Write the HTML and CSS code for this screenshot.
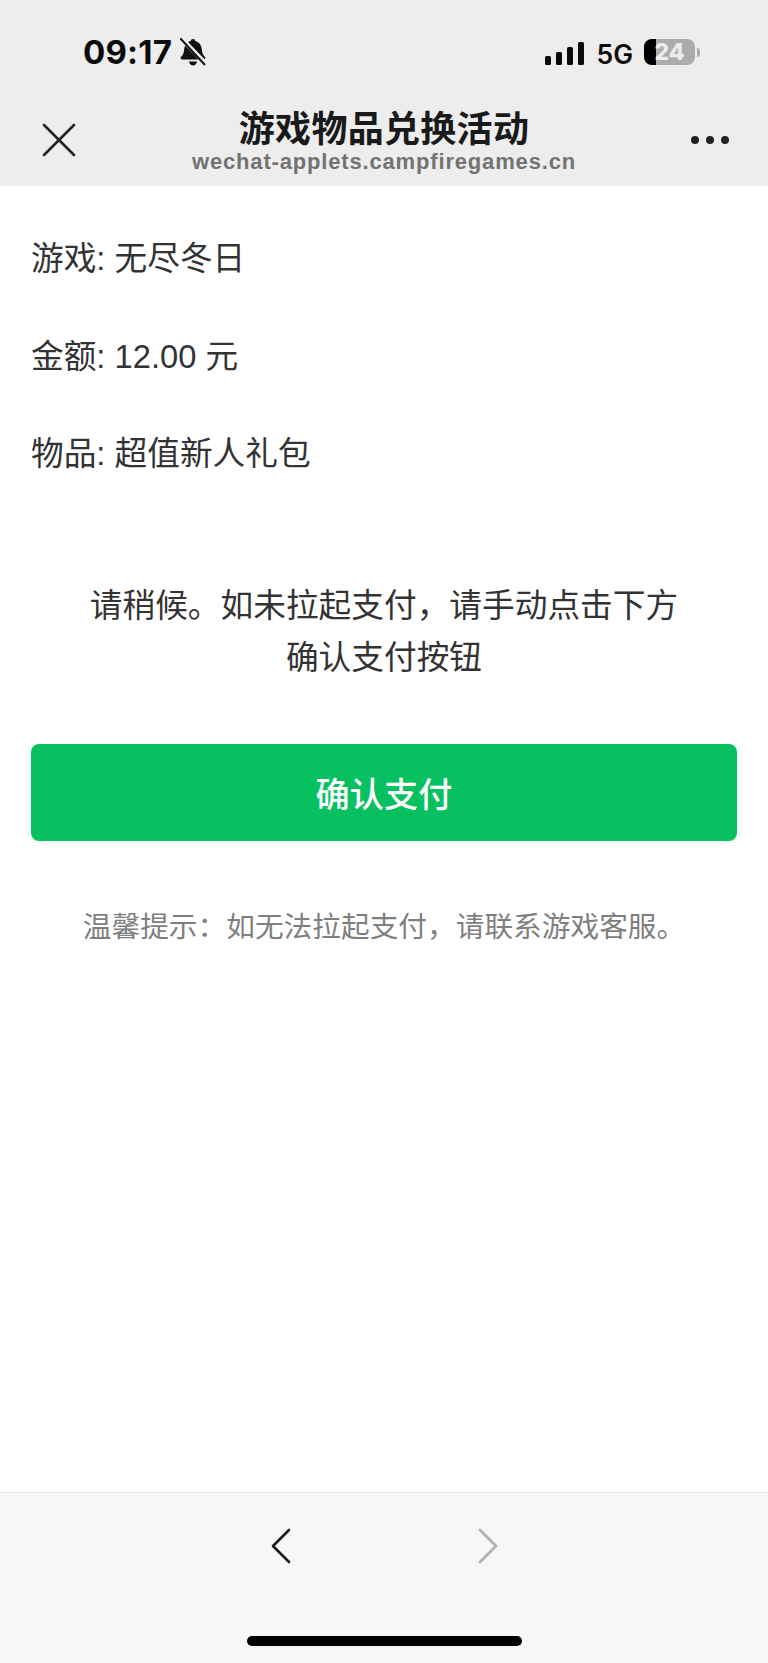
FILE: index.html
```html
<!DOCTYPE html>
<html lang="zh-CN">
<head>
<meta charset="utf-8">
<title>游戏物品兑换活动</title>
<link rel="stylesheet" href="styles.css">
</head>
<body>
<div class="screen">
  <header class="top">
    <div class="status">
      <div class="status-left">
        <span class="time">09:17</span>
        <svg class="bell" viewBox="0 0 26 28" width="26" height="28">
          <path d="M13 1c1.300 0 2.200.9 2.300 2 4 1 6.200 4.200 6.500 8.300.2 3.300 1 5.400 3.100 7.500.9 1 .4 2.700-1 2.700H2.100c-1.400 0-1.900-1.700-1-2.700 2.100-2.100 2.900-4.200 3.100-7.500.3-4.100 2.500-7.300 6.500-8.300.1-1.100 1-2 2.300-2z" fill="#111"/>
          <path d="M9 23.500h8c-.3 2.400-1.900 3.900-4 3.900s-3.700-1.500-4-3.900z" fill="#111"/>
          <path d="M1 0 26 26" stroke="#ededed" stroke-width="4.500"/>
          <path d="M0 0 25 27" stroke="#111" stroke-width="2"/>
        </svg>
      </div>
      <div class="status-right">
        <svg class="signal" viewBox="0 0 39 23" width="39" height="23">
          <rect x="0" y="14" width="6" height="9" rx="1.500"/>
          <rect x="11" y="10" width="6" height="13" rx="1.500"/>
          <rect x="22" y="5" width="6" height="18" rx="1.500"/>
          <rect x="33" y="0" width="6" height="23" rx="1.500"/>
        </svg>
        <span class="net">5G</span>
        <div class="battery">
          <div class="battery-body">
            <div class="battery-fill"></div>
            <span class="battery-level">24</span>
          </div>
          <div class="battery-cap"></div>
        </div>
      </div>
    </div>
    <div class="nav">
      <svg class="close" viewBox="0 0 34 34" width="34" height="34">
        <path d="M2 2 32 32M32 2 2 32" stroke="#222" stroke-width="2.600" fill="none" stroke-linecap="round"/>
      </svg>
      <div class="heading">
        <div class="title">游戏物品兑换活动</div>
        <div class="domain">wechat-applets.campfiregames.cn</div>
      </div>
      <div class="more"><i></i><i></i><i></i></div>
    </div>
  </header>

  <main class="content">
    <div class="details">
      <p class="detail">游戏: 无尽冬日</p>
      <p class="detail">金额: 12.00 元</p>
      <p class="detail">物品: 超值新人礼包</p>
    </div>
    <p class="notice">请稍候。如未拉起支付，请手动点击下方<br>确认支付按钮</p>
    <button class="pay" type="button">确认支付</button>
    <p class="hint">温馨提示：如无法拉起支付，请联系游戏客服。</p>
  </main>

  <footer class="toolbar">
    <div class="arrows">
      <svg viewBox="0 0 20 36" width="20" height="36"><path d="M18 2 2 18l16 16" stroke="#1a1a1a" stroke-width="2.600" fill="none" stroke-linecap="round" stroke-linejoin="round"/></svg>
      <svg viewBox="0 0 20 36" width="20" height="36"><path d="M2 2l16 16L2 34" stroke="#b0b0b0" stroke-width="2.600" fill="none" stroke-linecap="round" stroke-linejoin="round"/></svg>
    </div>
    <div class="home-bar"></div>
  </footer>
</div>
</body>
</html>
```

FILE: styles.css
```css
* { box-sizing: border-box; }

html, body {
  margin: 0;
  padding: 0;
  background: #fff;
}

body {
  font-family: "Liberation Sans", "Noto Sans CJK SC", sans-serif;
  color: #222;
}

.screen {
  width: 768px;
  height: 1663px;
  display: flex;
  flex-direction: column;
  overflow: hidden;
}

/* status bar and navigation */
.top {
  height: 186px;
  background: #ededed;
  flex: none;
}

.status {
  height: 106px;
  padding: 34px 68px 0 83px;
  display: flex;
  justify-content: space-between;
  align-items: flex-start;
}

.status-left {
  display: flex;
  align-items: center;
  gap: 8px;
  height: 36px;
}

.time {
  font-family: Inter, sans-serif;
  font-weight: 700;
  font-size: 33px;
  line-height: 36px;
  letter-spacing: 0.200px;
  color: #0b0b0b;
}

.bell { display: block; }

.status-right {
  display: flex;
  align-items: center;
  height: 36px;
}

.signal { display: block; fill: #0b0b0b; margin-top: 3px; }

.net {
  font-family: Inter, sans-serif;
  font-weight: 600;
  font-size: 26.500px;
  line-height: 36px;
  margin: 3px 11px 0 12px;
  color: #0b0b0b;
}

.battery {
  display: flex;
  align-items: center;
  gap: 2px;
}

.battery-body {
  position: relative;
  width: 51px;
  height: 26px;
  border-radius: 8px;
  background: #acacac;
  overflow: hidden;
  display: flex;
  align-items: center;
  justify-content: center;
}

.battery-fill {
  position: absolute;
  left: 0;
  top: 0;
  bottom: 0;
  width: 12px;
  background: #000;
}

.battery-level {
  position: relative;
  font-family: Inter, sans-serif;
  font-weight: 800;
  font-size: 23px;
  line-height: 26px;
  color: #ececec;
}

.battery-cap {
  width: 3px;
  height: 9px;
  border-radius: 0 3px 3px 0;
  background: #acacac;
}

.nav {
  height: 80px;
  padding: 0 39px 0 42px;
  display: flex;
  align-items: flex-start;
  position: relative;
}

.close { display: block; margin-top: 17px; }

.heading {
  position: absolute;
  left: 0;
  right: 0;
  top: 0;
  text-align: center;
}

.title {
  font-family: "Noto Sans CJK SC", sans-serif;
  font-weight: 700;
  font-size: 36px;
  line-height: 46px;
  letter-spacing: 0.300px;
  margin-top: -3px;
  color: #1a1a1a;
}

.domain {
  font-weight: 700;
  font-size: 22px;
  line-height: 26px;
  letter-spacing: 0.830px;
  color: #737373;
}

.more {
  margin-left: auto;
  margin-top: 30px;
  display: flex;
  gap: 7px;
}

.more i {
  display: block;
  width: 8px;
  height: 8px;
  border-radius: 50%;
  background: #222;
}

/* payment content */
.content {
  flex: 1;
  padding: 0 31px;
}

.details { padding-top: 24px; }

.detail {
  margin: 0;
  font-size: 32.700px;
  line-height: 97.500px;
  color: #333;
}

.notice {
  margin: 77px 0 0;
  font-size: 32.700px;
  line-height: 52px;
  text-align: center;
  color: #333;
}

.pay {
  display: block;
  width: 100%;
  height: 97px;
  margin-top: 60px;
  border: 0;
  border-radius: 8px;
  background: #07c160;
  color: #fff;
  font-family: "Noto Sans CJK SC", sans-serif;
  font-weight: 500;
  font-size: 34.200px;
}

.hint {
  margin: 66px 0 0;
  font-size: 28.700px;
  line-height: 40px;
  text-align: center;
  color: #7f7f7f;
}

/* bottom browser toolbar */
.toolbar {
  height: 171px;
  flex: none;
  background: #f7f7f7;
  border-top: 1px solid #e6e6e6;
  position: relative;
}

.arrows {
  padding-top: 35px;
  display: flex;
  justify-content: center;
  gap: 187px;
  margin-left: -70px;
  padding-left: 70px;
}

.home-bar {
  position: absolute;
  left: 247px;
  bottom: 17px;
  width: 275px;
  height: 10px;
  border-radius: 5px;
  background: #000;
}
```
